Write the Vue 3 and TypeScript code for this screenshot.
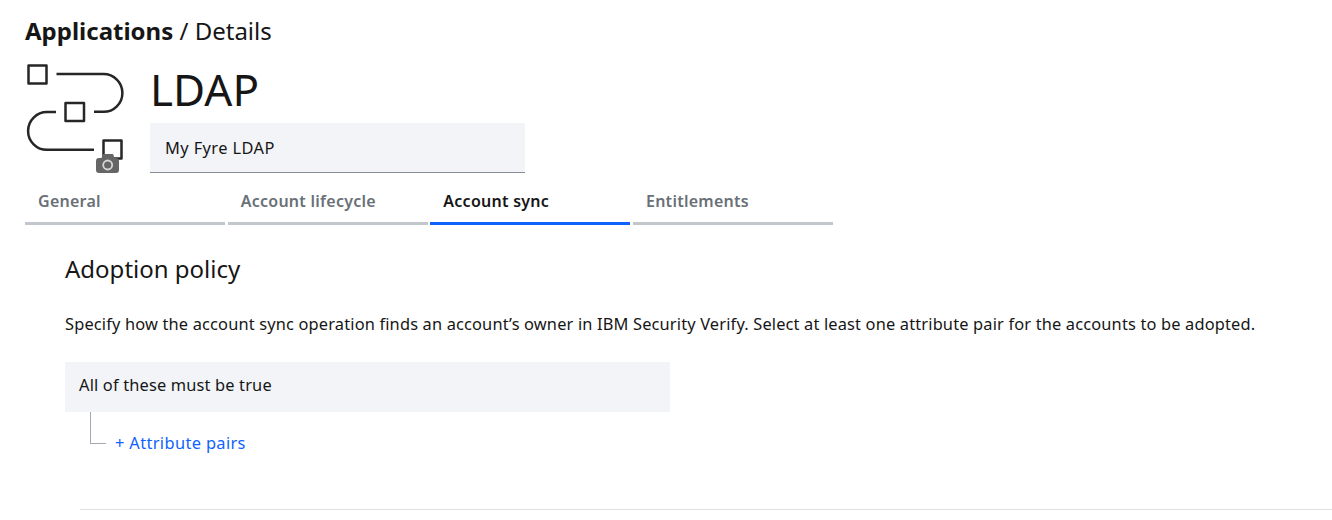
<script setup lang="ts">
const tabs: { label: string; active?: boolean }[] = [
  { label: 'General' },
  { label: 'Account lifecycle' },
  { label: 'Account sync', active: true },
  { label: 'Entitlements' },
]
</script>

<template>
  <div class="page">
    <div class="crumb"><strong>Applications</strong> / Details</div>
    <div class="head">
      <div class="logo">
        <svg width="104" height="112" viewBox="0 0 104 112" fill="none">
          <g stroke="#262626" stroke-width="2.500" stroke-linejoin="round">
            <rect x="3.500" y="2.500" width="18" height="18" />
            <rect x="40.500" y="40" width="18.500" height="18" />
            <rect x="78.500" y="77.500" width="18" height="18" />
            <path d="M31.500 11H78.500a18.900 18.900 0 0 1 0 37.800H69" />
            <path d="M31 49H22a18.900 18.900 0 0 0 0 37.800H69" />
          </g>
          <path d="M71 98a3 3 0 0 1 3-3h2.500l1.500-4h10l1.500 4h1.500a3 3 0 0 1 3 3v9a3 3 0 0 1-3 3H74a3 3 0 0 1-3-3z" fill="#666" />
          <circle cx="82.700" cy="102" r="4.500" fill="none" stroke="#d6d6d6" stroke-width="1.800" />
        </svg>
      </div>
      <div class="titles">
        <h1>LDAP</h1>
        <div class="input">My Fyre LDAP</div>
      </div>
    </div>
    <div class="tabs">
      <div v-for="t in tabs" :key="t.label" class="tab" :class="{ active: t.active }">{{ t.label }}</div>
    </div>
    <section class="body">
      <h2>Adoption policy</h2>
      <p>Specify how the account sync operation finds an account’s owner in IBM Security Verify. Select at least one attribute pair for the accounts to be adopted.</p>
      <div class="cond">All of these must be true</div>
      <div class="pairs">
        <span class="elbow"></span>
        <a class="link">+ Attribute pairs</a>
      </div>
    </section>
    <hr class="rule" />
  </div>
</template>

<style>
html, body { margin: 0; background: #fff; overflow: hidden; }
</style>

<style scoped>
.page {
  width: 1332px;
  height: 520px;
  overflow: hidden;
  font-family: "Noto Sans", "Liberation Sans", sans-serif;
  color: #161616;
  box-sizing: border-box;
  padding: 15px 0 0 25px;
}
.crumb { font-size: 24px; line-height: 32px; height: 33px; }
.crumb strong { font-weight: 700; }
.head { display: flex; height: 125px; }
.logo { width: 125px; padding-top: 15px; height: 112px; }
.logo svg { display: block; }
.titles { display: flex; flex-direction: column; }
h1 { margin: 0; font-size: 44px; font-weight: 400; line-height: 52px; padding-top: 15px; box-sizing: border-box; height: 75px; }
.input {
  width: 375px;
  height: 50px;
  box-sizing: border-box;
  background: #f2f4f8;
  border-bottom: 1px solid #878d96;
  padding-left: 15px;
  font-size: 16.400px;
  letter-spacing: 0.400px;
  line-height: 49px;
}
.tabs { display: flex; gap: 2.670px; }
.tab {
  width: 200px;
  height: 52px;
  box-sizing: border-box;
  border-bottom: 3px solid #c1c7cd;
  padding: 17px 0 0 13px;
  font-size: 16px;
  letter-spacing: 0.260px;
  line-height: 22px;
  font-weight: 600;
  color: #697077;
}
.tab.active { border-bottom-color: #0f62fe; color: #161616; }
.body { padding: 28px 0 0 40px; }
h2 { margin: 0; font-size: 24px; font-weight: 400; line-height: 32px; }
p { margin: 27px 0 0; font-size: 16.400px; letter-spacing: 0.160px; line-height: 24px; white-space: nowrap; }
.cond {
  margin-top: 26px;
  width: 605px;
  height: 50px;
  background: #f2f4f8;
  padding-left: 14px;
  box-sizing: border-box;
  font-size: 16.400px;
  letter-spacing: 0.160px;
  line-height: 46px;
}
.pairs { display: flex; align-items: flex-end; height: 44px; padding-left: 25px; }
.elbow { width: 16px; height: 32px; border-left: 1px solid #a2a9b0; border-bottom: 1px solid #a2a9b0; box-sizing: border-box; margin-bottom: 12px; }
.link { color: #0f62fe; font-size: 16.400px; letter-spacing: 0.360px; line-height: 24px; margin-left: 9px; margin-bottom: 1px; }
.rule { margin: 53px 0 0 55px; border: 0; border-top: 1px solid #e0e0e0; }
</style>
